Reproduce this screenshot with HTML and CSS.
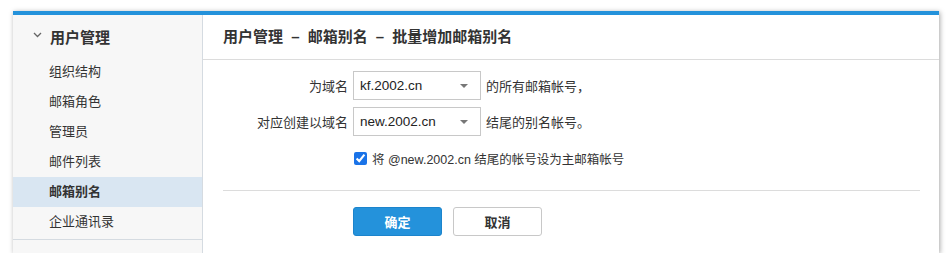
FILE: index.html
```html
<!DOCTYPE html>
<html lang="zh-CN">
<head>
<meta charset="UTF-8" />
<title>批量增加邮箱别名</title>
<link rel="stylesheet" href="styles.css">
</head>
<body>

<div class="frame">
  <div class="sidebar">
    <div class="group-title">
      <svg class="chevron" width="9" height="6" viewBox="0 0 9 6"><path d="M1 1 L4.5 4.5 L8 1" fill="none" stroke="#666" stroke-width="1.3"/></svg>
      用户管理
    </div>
    <ul class="menu">
      <li>组织结构</li>
      <li>邮箱角色</li>
      <li>管理员</li>
      <li>邮件列表</li>
      <li class="active">邮箱别名</li>
      <li>企业通讯录</li>
    </ul>
    <div class="sidebar-foot"></div>
  </div>

  <div class="main">
    <div class="main-header">用户管理 <span class="sep">–</span> 邮箱别名 <span class="sep">–</span> 批量增加邮箱别名</div>

    <div class="form">
      <div class="row">
        <label class="label">为域名</label>
        <div class="select"><span>kf.2002.cn</span><i class="caret"></i></div>
        <span class="after">的所有邮箱帐号，</span>
      </div>
      <div class="row">
        <label class="label">对应创建以域名</label>
        <div class="select"><span>new.2002.cn</span><i class="caret"></i></div>
        <span class="after">结尾的别名帐号。</span>
      </div>
      <div class="row check-row">
        <span class="label"></span>
        <label class="check">
          <input type="checkbox" checked />
          将 @new.2002.cn 结尾的帐号设为主邮箱帐号
        </label>
      </div>
    </div>

    <div class="divider"></div>

    <div class="actions">
      <button class="btn btn-primary">确定</button>
      <button class="btn">取消</button>
    </div>
  </div>
</div>

</body>
</html>
```

FILE: styles.css
```css
body {
  margin: 0;
  background: #fff;
  font-family: "Liberation Sans", "Noto Sans CJK SC", sans-serif;
  font-size: 13px;
  color: #333;
}
.frame {
  margin: 11px 0 0 13px;
  width: 926px;
  height: 242px;
  box-sizing: border-box;
  border-top: 4px solid #2492db;
  display: flex;
  background: #fff;
  box-shadow: 1px 1px 5px rgba(0,0,0,0.35);
}
.sidebar {
  width: 190px;
  flex: none;
  background: #f7f7f7;
  border-right: 1px solid #d5dbe1;
  box-sizing: border-box;
}
.group-title {
  height: 42px;
  display: flex;
  align-items: center;
  padding-left: 20px;
  font-size: 15px;
  font-weight: bold;
  color: #333;
}
.chevron {
  margin-right: 8px;
  margin-top: -3px;
}
.menu {
  list-style: none;
  margin: 0;
  padding: 0;
}
.menu li {
  height: 30px;
  line-height: 30px;
  padding-left: 36px;
  color: #333;
}
.menu li.active {
  background: #d9e6f2;
  font-weight: bold;
}
.sidebar-foot {
  margin-top: 2px;
  border-top: 1px solid #d5dbe1;
}
.main {
  flex: 1;
  padding: 0 19px 0 20px;
}
.main-header {
  height: 44px;
  line-height: 44px;
  margin: 0 -19px 0 -20px;
  padding-left: 20px;
  border-bottom: 1px solid #dcdcdc;
  font-size: 15px;
  font-weight: bold;
  color: #333;
}
.main-header .sep {
  margin: 0 4px;
}
.form {
  padding-top: 11px;
  display: flex;
  flex-direction: column;
  gap: 7px;
}
.row {
  display: flex;
  align-items: center;
  gap: 5px;
}
.label {
  width: 125px;
  text-align: right;
}
.select {
  width: 128px;
  height: 29px;
  box-sizing: border-box;
  border: 1px solid #c8c8c8;
  display: flex;
  align-items: center;
  justify-content: space-between;
  padding: 0 12px 0 6px;
  background: #fff;
  color: #222;
  font-size: 13.5px;
}
.caret {
  width: 0;
  height: 0;
  border-left: 4px solid transparent;
  border-right: 4px solid transparent;
  border-top: 4px solid #777;
}
.check-row {
  margin-top: 6px;
}
.check {
  display: flex;
  align-items: center;
  gap: 5px;
  margin-left: 1px;
  font-size: 12.5px;
}
.check input {
  margin: 0;
  width: 13px;
  height: 13px;
  accent-color: #1a73e8;
}
.divider {
  margin-top: 22px;
  border-top: 1px solid #dcdcdc;
}
.actions {
  padding: 16px 0 0 130px;
  display: flex;
  gap: 11px;
}
.btn {
  width: 89px;
  height: 29px;
  border: 1px solid #c8c8c8;
  border-radius: 3px;
  background: #fff;
  font-family: inherit;
  font-size: 13px;
  font-weight: bold;
  color: #333;
  cursor: pointer;
}
.btn-primary {
  background: #2492db;
  border-color: #1c84cc;
  color: #fff;
}
```
